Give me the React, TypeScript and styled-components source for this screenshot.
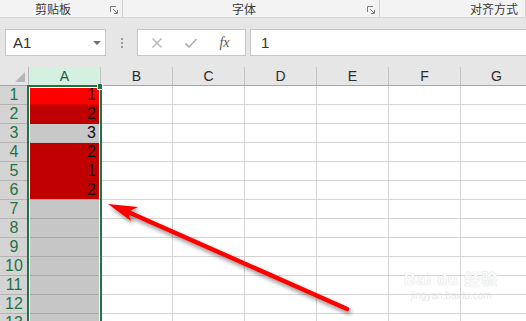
import React from "react";
import styled, { createGlobalStyle } from "styled-components";

const GlobalStyle = createGlobalStyle`
  html, body {
    margin: 0;
    padding: 0;
    overflow: hidden;
    background: #ffffff;
  }
  body {
    font-family: "Liberation Sans", "Noto Sans CJK SC", sans-serif;
  }
`;

const Page = styled.div`
  position: relative;
  width: 526px;
  height: 321px;
  overflow: hidden;
`;

const Ribbon = styled.div`
  display: flex;
  height: 18px;
  box-sizing: border-box;
  background: #f3f3f3;
  border-bottom: 1px solid #d6d6d6;
`;

const RibbonGroup = styled.div<{ $w: number; $pad: number }>`
  display: flex;
  align-items: center;
  flex-shrink: 0;
  width: ${(p) => p.$w}px;
  padding-left: ${(p) => p.$pad}px;
  box-sizing: border-box;
  border-right: 1px solid #d0d0d0;
  font-family: "Noto Sans CJK SC", sans-serif;
  font-size: 12px;
  color: #3a3a3a;
`;

const Launcher = styled.svg`
  margin-left: auto;
  margin-right: 4px;
  margin-top: 3px;
`;

const FormulaArea = styled.div`
  display: flex;
  align-items: flex-start;
  height: 49px;
  box-sizing: border-box;
  padding: 11px 0 0 5px;
  background: #e6e6e6;
`;

const NameBox = styled.div`
  display: flex;
  align-items: center;
  width: 101px;
  height: 27px;
  box-sizing: border-box;
  padding: 0 4px 0 7px;
  background: #ffffff;
  border: 1px solid #c6c6c6;
  font-size: 15px;
  color: #333333;
`;

const DropArrow = styled.span`
  margin-left: auto;
  width: 0;
  height: 0;
  border-left: 4px solid transparent;
  border-right: 4px solid transparent;
  border-top: 4px solid #6f6f6f;
`;

const Dots = styled.div`
  display: flex;
  flex-direction: column;
  gap: 2px;
  margin: 9px 14px 0 15px;
  span {
    width: 2px;
    height: 2px;
    background: #9a9a9a;
  }
`;

const FxBox = styled.div`
  display: flex;
  align-items: center;
  justify-content: space-around;
  width: 109px;
  height: 27px;
  box-sizing: border-box;
  padding: 0 5px 0 3px;
  background: #ffffff;
  border: 1px solid #c6c6c6;
`;

const FxLabel = styled.span`
  font-family: "Liberation Serif", serif;
  font-style: italic;
  font-size: 14px;
  color: #555555;
`;

const FormulaInput = styled.div`
  flex: 1;
  display: flex;
  align-items: center;
  height: 27px;
  box-sizing: border-box;
  margin-left: 4px;
  padding-left: 10px;
  background: #ffffff;
  border: 1px solid #c6c6c6;
  border-right: none;
  font-size: 15px;
  color: #333333;
`;

const Sheet = styled.div`
  position: relative;
  display: grid;
  grid-template-columns: 29px repeat(7, 72px);
  grid-auto-rows: 19px;
`;

const Corner = styled.div`
  position: relative;
  box-sizing: border-box;
  background: #e6e6e6;
  border-right: 1px solid #b8b8b8;
  border-bottom: 1px solid #a6a6a6;
  &::after {
    content: "";
    position: absolute;
    right: 3px;
    bottom: 3px;
    width: 0;
    height: 0;
    border-left: 10px solid transparent;
    border-bottom: 10px solid #b5b5b5;
  }
`;

const ColHead = styled.div<{ $selected?: boolean }>`
  display: flex;
  align-items: center;
  justify-content: center;
  box-sizing: border-box;
  background: ${(p) => (p.$selected ? "#d3f0e0" : "#e6e6e6")};
  border-right: 1px solid #c4c4c4;
  border-bottom: 1px solid #a6a6a6;
  font-size: 14px;
  color: ${(p) => (p.$selected ? "#215a3a" : "#2b2b2b")};
`;

const RowHead = styled.div`
  display: flex;
  align-items: center;
  justify-content: center;
  box-sizing: border-box;
  background: #d4d4d4;
  border-right: 1px solid #b0b0b0;
  border-bottom: 1px solid #b4b4b4;
  font-size: 16px;
  color: #217346;
`;

const Cell = styled.div<{ $fill?: string; $line?: string }>`
  display: flex;
  align-items: center;
  justify-content: flex-end;
  box-sizing: border-box;
  padding-right: 4px;
  background: ${(p) => p.$fill || "#ffffff"};
  border-right: 1px solid #d4d4d4;
  border-bottom: 1px solid ${(p) => p.$line || "#d4d4d4"};
  font-size: 16px;
  color: #111111;
`;

const Selection = styled.div`
  position: absolute;
  left: 27px;
  top: 18px;
  width: 75px;
  height: 260px;
  box-sizing: border-box;
  border: 2px solid #217346;
  box-shadow: inset 0 0 0 1px #ffffff;
  pointer-events: none;
`;

const FillHandle = styled.div`
  position: absolute;
  left: 97px;
  top: 17px;
  width: 6px;
  height: 6px;
  box-sizing: border-box;
  background: #217346;
  border: 1px solid #ffffff;
  border-top: none;
`;

const Watermark = styled.div`
  position: absolute;
  left: 404px;
  top: 266px;
  display: flex;
  flex-direction: column;
  align-items: center;
  color: rgba(255, 255, 255, 0.9);
  text-shadow: 0 0 1px #dadada, 0 0 1px #dadada;
  pointer-events: none;
  strong {
    font-size: 16px;
    font-weight: 700;
    letter-spacing: 1px;
  }
  span {
    font-size: 10px;
    color: rgba(225, 225, 225, 0.8);
    text-shadow: none;
  }
`;

const Arrow = styled.svg`
  position: absolute;
  left: 0;
  top: 0;
  pointer-events: none;
`;

const columns = ["A", "B", "C", "D", "E", "F", "G"];

const aCells: { value?: number; fill: string; line: string }[] = [
  { value: 1, fill: "#ff0000", line: "#e00000" },
  { value: 2, fill: "#c00000", line: "#b80000" },
  { value: 3, fill: "#c8c8c8", line: "#c0c0c0" },
  { value: 2, fill: "#c00000", line: "#c00000" },
  { value: 1, fill: "#c00000", line: "#c00000" },
  { value: 2, fill: "#c00000", line: "#ababab" },
];

const rowCount = 14;

const App = () => {
  return (
    <Page>
      <GlobalStyle />
      <Ribbon>
        <RibbonGroup $w={123} $pad={35}>
          剪贴板
          <Launcher width="8" height="8" viewBox="0 0 8 8">
            <path d="M0.5 6V0.5H6" fill="none" stroke="#7a7a7a" />
            <path d="M3 3L7 7M7.5 4V7.5H4" fill="none" stroke="#7a7a7a" />
          </Launcher>
        </RibbonGroup>
        <RibbonGroup $w={257} $pad={109}>
          字体
          <Launcher width="8" height="8" viewBox="0 0 8 8">
            <path d="M0.5 6V0.5H6" fill="none" stroke="#7a7a7a" />
            <path d="M3 3L7 7M7.5 4V7.5H4" fill="none" stroke="#7a7a7a" />
          </Launcher>
        </RibbonGroup>
        <RibbonGroup $w={146} $pad={90}>
          对齐方式
        </RibbonGroup>
      </Ribbon>

      <FormulaArea>
        <NameBox>
          A1
          <DropArrow />
        </NameBox>
        <Dots>
          <span />
          <span />
          <span />
        </Dots>
        <FxBox>
          <svg width="12" height="12" viewBox="0 0 12 12">
            <path d="M1.5 1.5L10.5 10.5M10.5 1.5L1.5 10.5" stroke="#b3b3b3" strokeWidth="1.4" />
          </svg>
          <svg width="14" height="12" viewBox="0 0 14 12">
            <path d="M1.5 6.5L5 10L12.5 2" fill="none" stroke="#b3b3b3" strokeWidth="1.8" />
          </svg>
          <FxLabel>fx</FxLabel>
        </FxBox>
        <FormulaInput>1</FormulaInput>
      </FormulaArea>

      <Sheet>
        <Corner />
        {columns.map((c, i) => (
          <ColHead key={c} $selected={i === 0}>
            {c}
          </ColHead>
        ))}
        {Array.from({ length: rowCount }, (_, r) => {
          const a = aCells[r] || { fill: "#c6c6c6", line: "#a9a9a9" };
          return (
            <React.Fragment key={r}>
              <RowHead>{r + 1}</RowHead>
              <Cell $fill={a.fill} $line={a.line}>
                {a.value}
              </Cell>
              {columns.slice(1).map((c) => (
                <Cell key={c} />
              ))}
            </React.Fragment>
          );
        })}
        <Selection />
        <FillHandle />
      </Sheet>

      <Watermark>
        <strong>Bai du 经验</strong>
        <span>jingyan.baidu.com</span>
      </Watermark>

      <Arrow width="526" height="321" viewBox="0 0 526 321">
        <defs>
          <filter id="shadow" x="-20%" y="-20%" width="140%" height="140%">
            <feDropShadow dx="2" dy="3" stdDeviation="2" floodColor="#000000" floodOpacity="0.45" />
          </filter>
        </defs>
        <g filter="url(#shadow)">
          <line x1="128" y1="212" x2="347" y2="309" stroke="#ff0000" strokeWidth="4.5" strokeLinecap="round" />
          <polygon points="108,204 138,207 128,212 131,221" fill="#ff0000" />
        </g>
      </Arrow>
    </Page>
  );
};

export default App;
